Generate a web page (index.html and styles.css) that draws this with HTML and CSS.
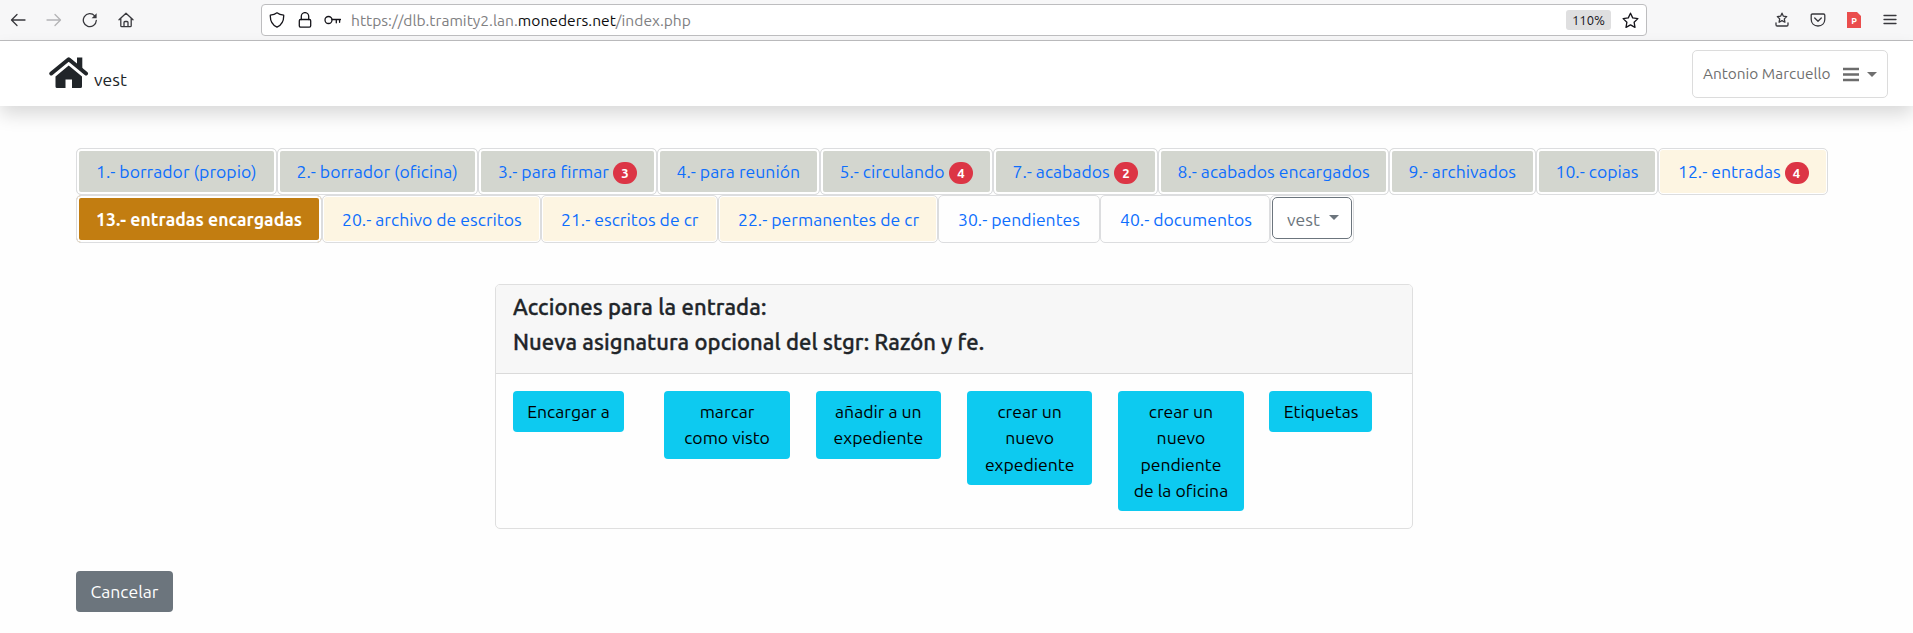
FILE: index.html
```html
<!DOCTYPE html>
<html lang="es">
<head>
<meta charset="utf-8">
<title>vest</title>
<link rel="stylesheet" href="styles.css">
</head>
<body>
<div class="browser">
  <div class="browser-nav">
    <svg width="16" height="16" viewBox="0 0 16 16"><path d="M15 8H2M7 2.500 1.500 8 7 13.500"/></svg>
    <svg class="dim" width="16" height="16" viewBox="0 0 16 16"><path d="M1 8h13M9 2.500 14.500 8 9 13.500"/></svg>
    <svg width="16" height="16" viewBox="0 0 16 16"><path d="M14.300 8.500A6.500 6.500 0 1 1 12.700 3.900"/><path d="M14.600 1.200v5h-5z" fill="#38383d" stroke="none"/></svg>
    <svg width="16" height="16" viewBox="0 0 16 16"><path d="M1 7.800 8 1.300l7 6.500M2.800 6.500v7.200q0 1 1 1h8.400q1 0 1-1V6.500M6 14.500v-4q0-1 1-1h2q1 0 1 1v4"/></svg>
  </div>
  <div class="urlbar">
    <svg class="shield" width="16" height="16" viewBox="0 0 16 16"><path d="M8 .8Q10.500 2.700 14.700 3.200C14.900 8.500 12.500 13 8 15.200 3.500 13 1.100 8.500 1.300 3.200 5.500 2.700 8 .8 8 .8z"/></svg>
    <svg class="lock" width="14" height="16" viewBox="0 0 14 16"><path d="M3.300 7.500V4.300a3.700 3.700 0 0 1 7.400 0v3.200"/><rect x="1.300" y="7.500" width="11.400" height="7.600" rx="1.300"/></svg>
    <svg class="key" width="17" height="12" viewBox="0 0 17 12"><circle cx="4.500" cy="6" r="3.500"/><path d="M8 5.500h8.500M12.300 5.500v3.300M15.600 5.500v2.800"/></svg>
    <span class="url">https://dlb.tramity2.lan.<b>moneders.net</b>/index.php</span>
    <span class="zoom">110%</span>
    <svg class="star" width="17" height="17" viewBox="0 0 17 17"><path d="m8.500 1.200 2.200 4.700 5.200.7-3.800 3.600.9 5.200-4.500-2.500L4 15.400l.9-5.200L1.100 6.600l5.200-.7z"/></svg>
  </div>
  <div class="browser-tools">
    <svg width="16" height="16" viewBox="0 0 16 16"><path d="m8 1.200 1.400 3 3.300.4-2.400 2.300.6 3.300L8 8.600l-2.900 1.600.6-3.300-2.400-2.300 3.300-.4zM2 10.800v2q0 1.200 1.200 1.200h9.600q1.200 0 1.200-1.200v-2"/></svg>
    <svg width="16" height="16" viewBox="0 0 16 16"><path d="M2.500 2h11q1.300 0 1.300 1.300v4C14.800 11.300 12 14 8 14S1.200 11.300 1.200 7.300v-4Q1.200 2 2.500 2zM4.700 6 8 9.300 11.300 6"/></svg>
    <span class="ext">P</span>
    <svg width="16" height="16" viewBox="0 0 16 16"><path d="M2 3.500h12M2 7.500h12M2 11.500h12"/></svg>
  </div>
</div>
<header class="navbar">
  <div class="brand">
    <svg width="40" height="32" viewBox="0 0 40 32"><path d="M2.300 16.500 19.700 2.300 37 16.500" fill="none" stroke="#212529" stroke-width="4" stroke-linecap="round" stroke-linejoin="round"/><path d="M28 .5h5.300v13L28 9z"/><path d="M19.700 8.500 33 19.500V29.500q0 1.500-1.500 1.500H23v-8.500h-6.500V31H8q-1.500 0-1.500-1.500v-10z"/></svg>
    <span class="brand-name">vest</span>
  </div>
  <div class="user"><span class="user-name">Antonio Marcuello</span>
    <svg width="16" height="15" viewBox="0 0 16 15"><path d="M0 2h16M0 7.500h16M0 13h16" stroke="#6c6c6c" stroke-width="2.500"/></svg>
    <i class="caret"></i>
  </div>
</header>
<main>
  <nav class="tabs">
    <div class="row">
      <div class="tab gray w1"><a>1.- borrador (propio)</a></div>
      <div class="tab gray w2"><a>2.- borrador (oficina)</a></div>
      <div class="tab gray w3"><a>3.- para firmar</a><span class="badge">3</span></div>
      <div class="tab gray w4"><a>4.- para reunión</a></div>
      <div class="tab gray w5"><a>5.- circulando</a><span class="badge">4</span></div>
      <div class="tab gray w7"><a>7.- acabados</a><span class="badge">2</span></div>
      <div class="tab gray w8"><a>8.- acabados encargados</a></div>
      <div class="tab gray w9"><a>9.- archivados</a></div>
      <div class="tab gray w10"><a>10.- copias</a></div>
      <div class="tab cream w12"><a>12.- entradas</a><span class="badge">4</span></div>
    </div>
    <div class="row">
      <div class="tab active w13"><a>13.- entradas encargadas</a></div>
      <div class="tab cream w20"><a>20.- archivo de escritos</a></div>
      <div class="tab cream w21"><a>21.- escritos de cr</a></div>
      <div class="tab cream w22"><a>22.- permanentes de cr</a></div>
      <div class="tab plain w30"><a>30.- pendientes</a></div>
      <div class="tab plain w40"><a>40.- documentos</a></div>
      <div class="tab select"><button class="office"><span>vest</span><i class="caret"></i></button></div>
    </div>
  </nav>
  <section class="card">
    <div class="card-head">
      <h5>Acciones para la entrada:</h5>
      <h5>Nueva asignatura opcional del stgr: Razón y fe.</h5>
    </div>
    <div class="card-body">
      <div class="col"><button class="btn b1">Encargar a</button></div>
      <div class="col"><button class="btn wide">marcar<br>como visto</button></div>
      <div class="col"><button class="btn wide">añadir a un<br>expediente</button></div>
      <div class="col"><button class="btn wide">crear un<br>nuevo<br>expediente</button></div>
      <div class="col"><button class="btn wide">crear un<br>nuevo<br>pendiente<br>de la oficina</button></div>
      <div class="col"><button class="btn b6">Etiquetas</button></div>
    </div>
  </section>
  <button class="btn cancel">Cancelar</button>
</main>
</body>
</html>
```
FILE: styles.css
```css
* { box-sizing: border-box; }
body {
  margin: 0;
  background: #fefefe;
  color: #212529;
  font-family: Ubuntu, "Noto Sans", sans-serif;
  font-size: 17.6px;
  line-height: 26.4px;
  height: 633px;
  overflow: hidden;
}
svg { display: block; flex: none; }
button { font: inherit; }
.browser {
  height: 41px;
  background: #f7f7f8;
  border-bottom: 1px solid #bdbdbf;
  display: flex;
  align-items: center;
}
.browser svg { fill: none; stroke: #38383d; stroke-width: 1.3; stroke-linecap: round; stroke-linejoin: round; }
.browser .dim { stroke: #b4b4b6; }
.browser-nav { display: flex; gap: 20px; padding-left: 10px; width: 261px; }
.urlbar {
  width: 1386px;
  height: 32px;
  background: #fff;
  border: 1px solid #bdbdbf;
  border-radius: 4px;
  display: flex;
  align-items: center;
  padding-left: 7px;
}
.urlbar svg { stroke: #15141a; }
.lock { margin-left: 13px; }
.key { margin-left: 12px; }
.url { margin-left: 10px; padding-top: 1px; font-size: 15.6px; color: #808082; white-space: nowrap; }
.url b { font-weight: 400; color: #0c0c0d; }
.zoom {
  margin-left: auto;
  width: 45px;
  height: 20px;
  border-radius: 3px;
  background: #dfdfe0;
  color: #15141a;
  font-size: 13px;
  line-height: 21px;
  text-align: center;
}
.star { margin: 0 7px 0 11px; }
.browser-tools { display: flex; gap: 20px; margin-left: 127px; align-items: center; }
.ext {
  width: 14px;
  height: 16px;
  margin: 0 1px;
  background: #ea4d4d;
  clip-path: polygon(0 0, 10px 0, 14px 4px, 14px 16px, 0 16px);
  color: #fff;
  font-size: 9px;
  font-weight: 700;
  line-height: 18px;
  text-align: center;
}
.navbar {
  height: 65px;
  background: #fff;
  box-shadow: 0 8.8px 17.6px rgba(0, 0, 0, .15);
  display: flex;
  justify-content: space-between;
  padding: 9px 25px 0 49px;
}
.brand { display: flex; gap: 5px; padding-top: 7px; }
.brand svg { fill: #212529; }
.brand-name { padding-top: 10px; }
.user {
  width: 196px;
  height: 48px;
  border: 1px solid #dcdcdc;
  border-radius: 5px;
  color: #6f6f6f;
  display: flex;
  align-items: center;
  padding-left: 10px;
}
.user-name { width: 128px; margin-right: 12px; padding-top: 1px; font-size: 15.4px; white-space: nowrap; }
.caret { width: 0; height: 0; border: 5px solid transparent; border-top-color: currentColor; border-bottom: 0; }
.user .caret { margin-left: 8px; }
main { padding: 42px 76px 0; }
.tabs { height: 95px; }
.row { display: flex; height: 47.4px; }
.tab {
  flex: none;
  height: 47.4px;
  border: 1px solid #dcdddf;
  border-radius: 5px;
  color: #0d6efd;
  display: flex;
  align-items: center;
  white-space: nowrap;
}
.tab a { padding: 2px 0 0 19px; }
.gray { box-shadow: inset 0 0 0 2px #fff; background: #d3d6cf; }
.cream { box-shadow: inset 0 0 0 1px #fff; background: #fdf5e2; }
.active { box-shadow: inset 0 0 0 2px #fff; background: #c27d11; color: #fff; font-weight: 700; letter-spacing: .05px; }
.w1 { width: 200.5px; }
.w2 { width: 201.5px; }
.w3 { width: 178.5px; }
.w4 { width: 163px; }
.w5 { width: 173px; }
.w7 { width: 165px; }
.w8 { width: 231px; }
.w9 { width: 147px; }
.w10 { width: 122.5px; }
.w12 { width: 170px; }
.w13 { width: 246px; }
.w20 { width: 219px; }
.w21 { width: 177px; }
.w22 { width: 220px; }
.w30 { width: 162px; }
.w40 { width: 170px; }
.badge {
  width: 24px;
  height: 22px;
  margin: 3px 18.5px 0 auto;
  border-radius: 11px;
  background: #dc3545;
  color: #fff;
  font-size: 13.2px;
  font-weight: 700;
  line-height: 23px;
  text-align: center;
}
.select { width: 84px; padding: 1px; align-items: flex-start; }
.office {
  width: 80px;
  height: 42px;
  padding: 3px 0 0 14px;
  border: 1px solid #6c757d;
  border-radius: 5px;
  background: #fff;
  color: #6c757d;
  display: flex;
  align-items: center;
}
.office .caret { margin: -5px 0 0 9px; }
.card {
  width: 918px;
  height: 245px;
  margin: 41px 0 0 419px;
  border: 1px solid #dfdfdf;
  border-radius: 5px;
  overflow: hidden;
}
.card-head { height: 89px; padding: 9px 17px 0; background: #f7f7f7; border-bottom: 1px solid #dadada; }
h5 {
  margin: 0 0 8.8px;
  font-size: 22px;
  line-height: 26.4px;
  font-weight: 500;
  letter-spacing: .08px;
  -webkit-text-stroke: .35px #212529;
  white-space: nowrap;
}
.card-body { display: flex; padding: 17px; align-items: flex-start; }
.col { flex: none; width: 151.3px; }
.btn {
  display: block;
  padding: 8px 0 6.8px;
  border: 0;
  border-radius: 4px;
  background: #0dcaf0;
  color: #000;
  line-height: 26.4px;
  text-align: center;
}
.b1 { width: 111px; }
.b6 { width: 103px; }
.wide { width: 125.5px; }
.cancel { width: 97px; margin-top: 42px; background: #6c757d; color: #fff; }
```
